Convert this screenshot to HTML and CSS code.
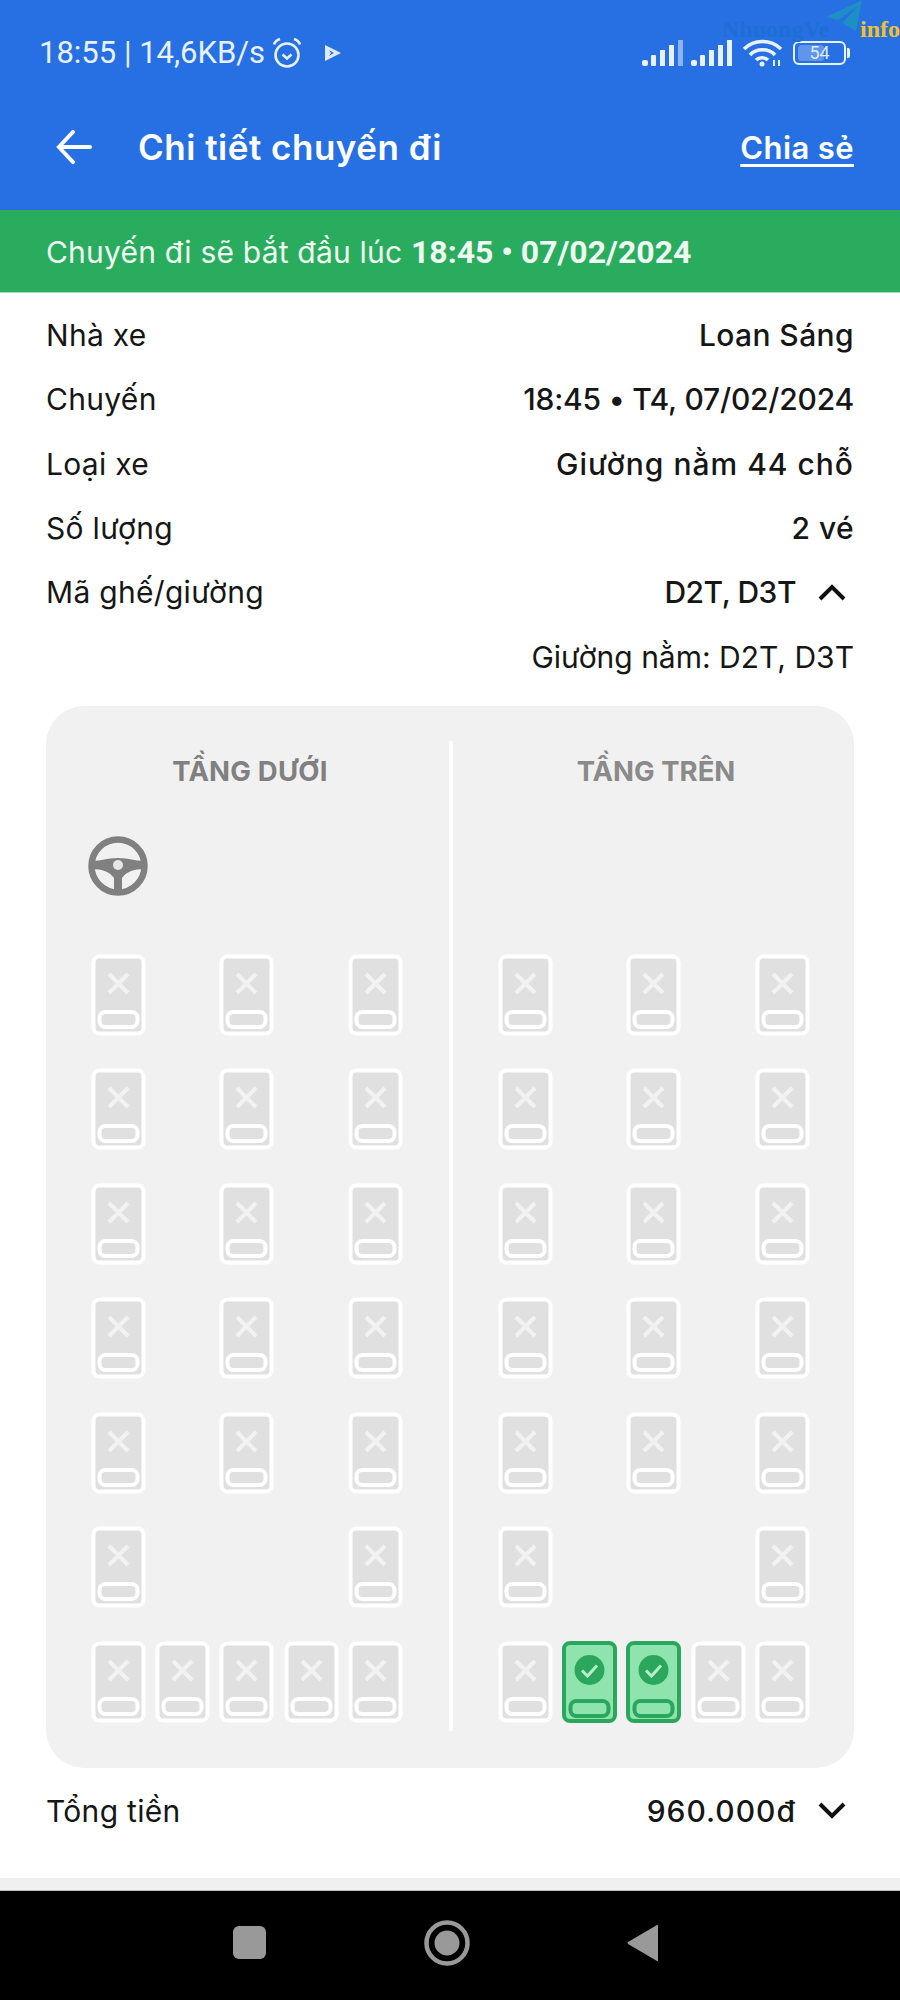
FILE: index.html
```html
<!DOCTYPE html>
<html lang="vi">
<head>
<meta charset="utf-8">
<title>Chi tiết chuyến đi</title>
<link rel="stylesheet" href="styles.css">
</head>
<body>
<svg class="defs" width="0" height="0" aria-hidden="true">
  <symbol id="off" viewBox="0 0 55 82">
    <rect x="2.500" y="2.500" width="50" height="77" rx="6" fill="#e0e0e0" stroke="#fff" stroke-width="4"/>
    <path d="M18 20 37 39M37 20 18 39" stroke="#f2f2f2" stroke-width="4" fill="none"/>
    <rect x="8.500" y="58" width="38" height="15" rx="6" fill="#e0e0e0" stroke="#fff" stroke-width="4"/>
  </symbol>
  <symbol id="on" viewBox="0 0 55 82">
    <rect x="2" y="2" width="51" height="78" rx="6" fill="#8fe4ae" stroke="#2aa65d" stroke-width="4"/>
    <circle cx="27.500" cy="29" r="15" fill="#2aa65d"/>
    <path d="M20 29.500 25.500 35 35 24.500" stroke="#b5eecb" stroke-width="3" fill="none"/>
    <rect x="8.500" y="60" width="38" height="15" rx="6" fill="#8fe4ae" stroke="#2aa65d" stroke-width="4"/>
  </symbol>
</svg>
<main class="screen">
  <header class="head">
    <div class="status">
      <div class="status-left">
        <span class="clock">18:55 | 14,6KB/s</span>
        <svg class="alarm" viewBox="0 0 32 32" fill="none" stroke="#e8f1ff" stroke-width="2.600"><circle cx="16" cy="18" r="11.500"/><path d="M11.500 17.500 16 21.500 20.500 17.500M3 7.500C4 4.500 6 3 9 2M29 7.500C28 4.500 26 3 23 2"/></svg>
        <svg class="play" viewBox="0 0 18 18"><path d="M1 1 17 9 1 17Z" fill="#dfeaff"/><path d="M5 6 10 9 5 12 7 9Z" fill="#2670e3"/></svg>
      </div>
      <div class="status-right">
        <svg class="signal" viewBox="0 0 41 26"><g fill="#e8f1ff"><rect x="0" y="20" width="6" height="6" rx="2"/><rect x="9" y="15" width="5" height="11" rx="1"/><rect x="18" y="10" width="5" height="16"/><rect x="27" y="5" width="5" height="21"/></g><rect x="36" y="0" width="5" height="26" fill="#8db4f1"/></svg>
        <svg class="signal" viewBox="0 0 41 26"><g fill="#e8f1ff"><rect x="0" y="20" width="6" height="6" rx="2"/><rect x="9" y="15" width="5" height="11" rx="1"/><rect x="18" y="10" width="5" height="16"/><rect x="27" y="5" width="5" height="21"/><rect x="36" y="0" width="5" height="26"/></g></svg>
        <svg class="wifi" viewBox="0 0 41 29" fill="none" stroke="#e8f1ff" stroke-width="3.600"><path d="M2 11C12 1 29 1 39 11M8 17C14 10 27 10 33 17M14 22C17 19 23 19 26 22"/><circle cx="20" cy="26" r="2.500" fill="#e8f1ff" stroke="none"/><path d="M32 22V28M37 22V28" stroke-width="2"/></svg>
        <div class="battery"><span class="battery-fill"></span><span class="battery-num">54</span></div>
        <span class="battery-nub"></span>
      </div>
    </div>
    <div class="appbar">
      <svg class="back" viewBox="0 0 38 36" fill="none" stroke="#fff" stroke-width="4" stroke-linecap="round"><path d="M3 18H36M18 2 3 18 18 34"/></svg>
      <h1 class="title">Chi tiết chuyến đi</h1>
      <a class="share">Chia sẻ</a>
    </div>
  </header>
  <div class="watermark"><svg class="plane" viewBox="0 0 36 36"><path d="M36 0 0 17 12 20 32 6 16 23 30 31Z" fill="#1c8fc4"/></svg><span class="wm-name">NhuongVe</span><span class="wm-info">info</span></div>
  <div class="banner">Chuyến đi sẽ bắt đầu lúc <b>18:45 • 07/02/2024</b></div>

  <section class="info">
    <div class="row"><span>Nhà xe</span><span class="val">Loan Sáng</span></div>
    <div class="row"><span>Chuyến</span><span class="val num">18:45 • T4, 07/02/2024</span></div>
    <div class="row"><span>Loại xe</span><span class="val wide">Giường nằm 44 chỗ</span></div>
    <div class="row"><span>Số lượng</span><span class="val">2 vé</span></div>
    <div class="row"><span>Mã ghế/giường</span><span class="val with-icon tight">D2T, D3T<svg class="chev" viewBox="0 0 28 18" fill="none" stroke="#111" stroke-width="4"><path d="M2 16 14 4 26 16"/></svg></span></div>
    <div class="row sub"><span class="val-light">Giường nằm: D2T, D3T</span></div>
  </section>

  <section class="panel">
    <div class="deck">
      <h2 class="deck-title lower">TẦNG DƯỚI</h2>
      <div class="driver">
        <svg class="wheel" viewBox="0 0 60 60"><circle cx="30" cy="30" r="26.500" fill="none" stroke="#808080" stroke-width="6.500"/><path d="M4 25C14 25 18 22 30 22 42 22 46 25 56 25L56 33C46 33 38 36 34 42L34 56H26L26 42C22 36 14 33 4 33Z" fill="#808080"/><circle cx="30" cy="29" r="5" fill="#e6e6e6"/></svg>
      </div>
      <div class="seats">
        <svg class="seat c1"><use href="#off"/></svg><svg class="seat c3"><use href="#off"/></svg><svg class="seat c5"><use href="#off"/></svg>
        <svg class="seat c1"><use href="#off"/></svg><svg class="seat c3"><use href="#off"/></svg><svg class="seat c5"><use href="#off"/></svg>
        <svg class="seat c1"><use href="#off"/></svg><svg class="seat c3"><use href="#off"/></svg><svg class="seat c5"><use href="#off"/></svg>
        <svg class="seat c1"><use href="#off"/></svg><svg class="seat c3"><use href="#off"/></svg><svg class="seat c5"><use href="#off"/></svg>
        <svg class="seat c1"><use href="#off"/></svg><svg class="seat c3"><use href="#off"/></svg><svg class="seat c5"><use href="#off"/></svg>
        <svg class="seat c1"><use href="#off"/></svg><svg class="seat c5"><use href="#off"/></svg>
        <svg class="seat"><use href="#off"/></svg><svg class="seat"><use href="#off"/></svg><svg class="seat"><use href="#off"/></svg><svg class="seat"><use href="#off"/></svg><svg class="seat"><use href="#off"/></svg>
      </div>
    </div>
    <div class="divider"></div>
    <div class="deck">
      <h2 class="deck-title upper">TẦNG TRÊN</h2>
      <div class="driver"></div>
      <div class="seats">
        <svg class="seat c1"><use href="#off"/></svg><svg class="seat c3"><use href="#off"/></svg><svg class="seat c5"><use href="#off"/></svg>
        <svg class="seat c1"><use href="#off"/></svg><svg class="seat c3"><use href="#off"/></svg><svg class="seat c5"><use href="#off"/></svg>
        <svg class="seat c1"><use href="#off"/></svg><svg class="seat c3"><use href="#off"/></svg><svg class="seat c5"><use href="#off"/></svg>
        <svg class="seat c1"><use href="#off"/></svg><svg class="seat c3"><use href="#off"/></svg><svg class="seat c5"><use href="#off"/></svg>
        <svg class="seat c1"><use href="#off"/></svg><svg class="seat c3"><use href="#off"/></svg><svg class="seat c5"><use href="#off"/></svg>
        <svg class="seat c1"><use href="#off"/></svg><svg class="seat c5"><use href="#off"/></svg>
        <svg class="seat"><use href="#off"/></svg><svg class="seat"><use href="#on"/></svg><svg class="seat"><use href="#on"/></svg><svg class="seat"><use href="#off"/></svg><svg class="seat"><use href="#off"/></svg>
      </div>
    </div>
  </section>

  <div class="total"><span>Tổng tiền</span><span class="val with-icon wide">960.000đ<svg class="chev" viewBox="0 0 28 18" fill="none" stroke="#111" stroke-width="4"><path d="M2 2 14 14 26 2"/></svg></span></div>
  <div class="spacer"></div>
  <div class="strip"></div>
  <nav class="nav">
    <span class="nav-square"></span>
    <svg class="nav-circle" viewBox="0 0 46 46"><circle cx="23" cy="23" r="20.500" fill="none" stroke="#999" stroke-width="4.500"/><circle cx="23" cy="23" r="12.500" fill="#999"/></svg>
    <svg class="nav-back" viewBox="0 0 31 38"><path d="M30 1Q31 0 31 2V36Q31 38 30 37L1 20Q0 19 1 18Z" fill="#999"/></svg>
  </nav>
</main>
</body>
</html>
```
FILE: styles.css
```css
* { box-sizing: border-box; }
html, body { margin: 0; padding: 0; background: #fff; }
body { font-family: "Inter", "Roboto", "Noto Sans", sans-serif; color: #161616; }
.defs { position: absolute; }
.screen { position: relative; width: 900px; height: 2000px; display: flex; flex-direction: column; overflow: hidden; }

.head { height: 210px; background: #2670e3; color: #fff; display: flex; flex-direction: column; flex: none; }
.status { height: 105px; padding: 0 50px 0 39px; display: flex; justify-content: space-between; align-items: center; }
.status-left, .status-right { display: flex; align-items: center; }
.clock { font: 400 31px/1 "Roboto", sans-serif; color: #e8f1ff; white-space: nowrap; }
.alarm { width: 32px; height: 32px; margin-left: 6px; }
.play { width: 18px; height: 18px; margin-left: 21px; }
.signal { width: 41px; height: 26px; margin-right: 8px; }
.wifi { width: 41px; height: 29px; margin: 0 10px 0 2px; }
.battery { position: relative; width: 53px; height: 24px; border: 2.500px solid #e8f1ff; border-radius: 6px; display: flex; align-items: center; justify-content: center; }
.battery-fill { position: absolute; left: 3px; top: 2px; bottom: 2px; width: 26px; background: #5f95ea; border-radius: 3px; }
.battery-num { position: relative; font: 400 18px/1 "Roboto", sans-serif; color: #dfeaff; }
.battery-nub { width: 3px; height: 10px; margin-left: 1px; background: #e8f1ff; border-radius: 0 2px 2px 0; }

.appbar { flex: 1; padding: 0 46px 21px 56px; display: flex; align-items: center; }
.back { width: 36px; height: 36px; flex: none; }
.title { margin: 0 0 0 46px; flex: 1; font-size: 35px; font-weight: 600; line-height: 1.200; letter-spacing: 0.5px; }
.share { font-size: 31px; font-weight: 600; text-decoration: underline; text-underline-offset: 5px; letter-spacing: 0.4px; }

.watermark { position: absolute; top: 0; right: 0; width: 178px; height: 42px; white-space: nowrap; }
.plane { position: absolute; right: 38px; top: 0; width: 36px; height: 36px; }
.wm-name { position: absolute; left: 0; top: 16px; font: 700 24px/1.100 "Liberation Serif", serif; color: #1d6fd5; }
.wm-info { position: absolute; right: 0; top: 16px; font: 700 24px/1.100 "Liberation Serif", serif; color: #f2c12e; }

.banner { height: 83px; padding: 2px 46px 0; background: #2aac5f; color: #eefaf2; display: flex; align-items: center; white-space: pre; font-size: 30px; letter-spacing: 0.2px; flex: none; border-bottom: 1px solid #9fdcb8; }
.banner b { font-family: "Roboto", sans-serif; font-size: 32px; font-weight: 700; letter-spacing: 0; }

.info { padding: 10px 46px 0; flex: none; }
.row { height: 64.300px; display: flex; justify-content: space-between; align-items: center; font-size: 30px; letter-spacing: 0.3px; }
.val { font-weight: 500; letter-spacing: 0.4px; }
.val.num { letter-spacing: -0.2px; }
.val.tight { letter-spacing: -0.5px; }
.val.wide { letter-spacing: 1px; }
.with-icon { display: flex; align-items: center; }
.chev { width: 28px; height: 18px; margin: 0 8px 0 22px; }
.sub { justify-content: flex-end; }
.val-light { font-weight: 400; letter-spacing: 0; }

.panel { margin: 17px 46px 0; height: 1062px; background: #f1f1f1; border-radius: 38px; display: flex; padding: 35px 45px 37px; flex: none; }
.deck { width: 313px; flex: none; display: flex; flex-direction: column; }
.deck-title { margin: 0; height: 60px; text-align: center; font-size: 27.500px; line-height: 60px; font-weight: 700; color: #808080; }
.deck-title.lower { padding-left: 5px; letter-spacing: 0.2px; }
.deck-title.upper { color: #8a8a8a; padding-left: 3px; }
.driver { height: 153px; padding-top: 35px; }
.wheel { display: block; width: 60px; height: 60px; margin-left: -3px; }
.divider { width: 4px; margin: 0 45px; background: #fff; flex: none; }

.seats { display: grid; grid-template-columns: repeat(5, 55px); column-gap: 9.200px; grid-auto-rows: 82px; row-gap: 32.500px; }
.seat { width: 55px; height: 82px; display: block; }
.c1 { grid-column: 1; }
.c3 { grid-column: 3; }
.c5 { grid-column: 5; }

.total { height: 86px; padding: 0 46px; display: flex; justify-content: space-between; align-items: center; font-size: 30px; letter-spacing: 0.3px; flex: none; }
.spacer { height: 24px; flex: none; }
.strip { height: 13px; background: #f0f0f0; border-bottom: 1px solid #bdbdbd; flex: none; }
.nav { flex: 1; background: #000; display: flex; align-items: center; justify-content: center; padding: 0 10px 5px 0; }
.nav-square { width: 33px; height: 33px; background: #999; border-radius: 6px; margin-right: 158px; }
.nav-circle { width: 46px; height: 46px; margin-right: 157px; }
.nav-back { width: 31px; height: 38px; }
```
